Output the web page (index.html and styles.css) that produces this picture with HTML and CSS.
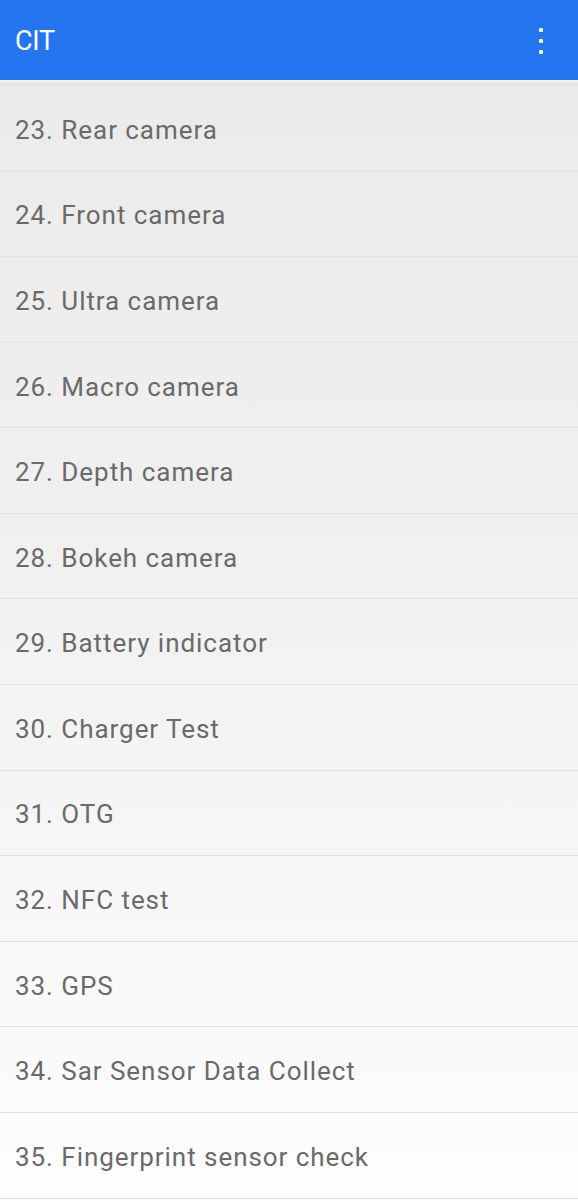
FILE: index.html
```html
<!DOCTYPE html>
<html lang="en">
<head>
    <meta charset="UTF-8">
    <meta name="viewport" content="width=device-width, initial-scale=1.0">
    <title>CIT</title>
    <link rel="stylesheet" href="styles.css">
</head>
<body>
    <div class="toolbar">
        <span class="title">CIT</span>
        <button class="menu" aria-label="More options">
            <span class="dot"></span>
            <span class="dot"></span>
            <span class="dot"></span>
        </button>
    </div>
    <div class="divider"></div>

    <ul class="test-list">
        <li class="item">23. Rear camera</li>
        <li class="item">24. Front camera</li>
        <li class="item">25. Ultra camera</li>
        <li class="item">26. Macro camera</li>
        <li class="item">27. Depth camera</li>
        <li class="item">28. Bokeh camera</li>
        <li class="item">29. Battery indicator</li>
        <li class="item">30. Charger Test</li>
        <li class="item">31. OTG</li>
        <li class="item">32. NFC test</li>
        <li class="item">33. GPS</li>
        <li class="item">34. Sar Sensor Data Collect</li>
        <li class="item">35. Fingerprint sensor check</li>
    </ul>
</body>
</html>
```

FILE: styles.css
```css
:root {
    --primary: #2575f0;
    --text: #6a6a6a;
    --line: #e0e0e0;
}

* {
    box-sizing: border-box;
    margin: 0;
    padding: 0;
}

body {
    font-family: Roboto, 'Noto Sans', sans-serif;
    background: #fdfdfd;
    overflow: hidden;
}

.toolbar {
    height: 80px;
    background: var(--primary);
    display: flex;
    align-items: center;
    justify-content: space-between;
    padding: 0 27px 0 15px;
}

.title {
    color: white;
    font-size: 27px;
    letter-spacing: -0.3px;
    margin-top: 1px;
}

.menu {
    background: none;
    border: none;
    width: 20px;
    display: flex;
    flex-direction: column;
    align-items: center;
    gap: 7px;
    margin-top: 1px;
}

.dot {
    width: 4px;
    height: 4px;
    border-radius: 1px;
    background: white;
}

.divider {
    height: 6px;
    background: linear-gradient(#f6f6f6 0, #f6f6f6 2px, #e6e6e6 2px, #e8e8e8 5px, #dedede 5px);
}

.test-list {
    list-style: none;
    background: linear-gradient(#ebebeb, #f0f0f0 40%, #fdfdfd);
}

.item {
    height: 85.58px;
    display: flex;
    align-items: center;
    padding: 3px 0 0 15px;
    color: var(--text);
    font-size: 26px;
    letter-spacing: 0.95px;
    border-bottom: 1px solid var(--line);
}
```
